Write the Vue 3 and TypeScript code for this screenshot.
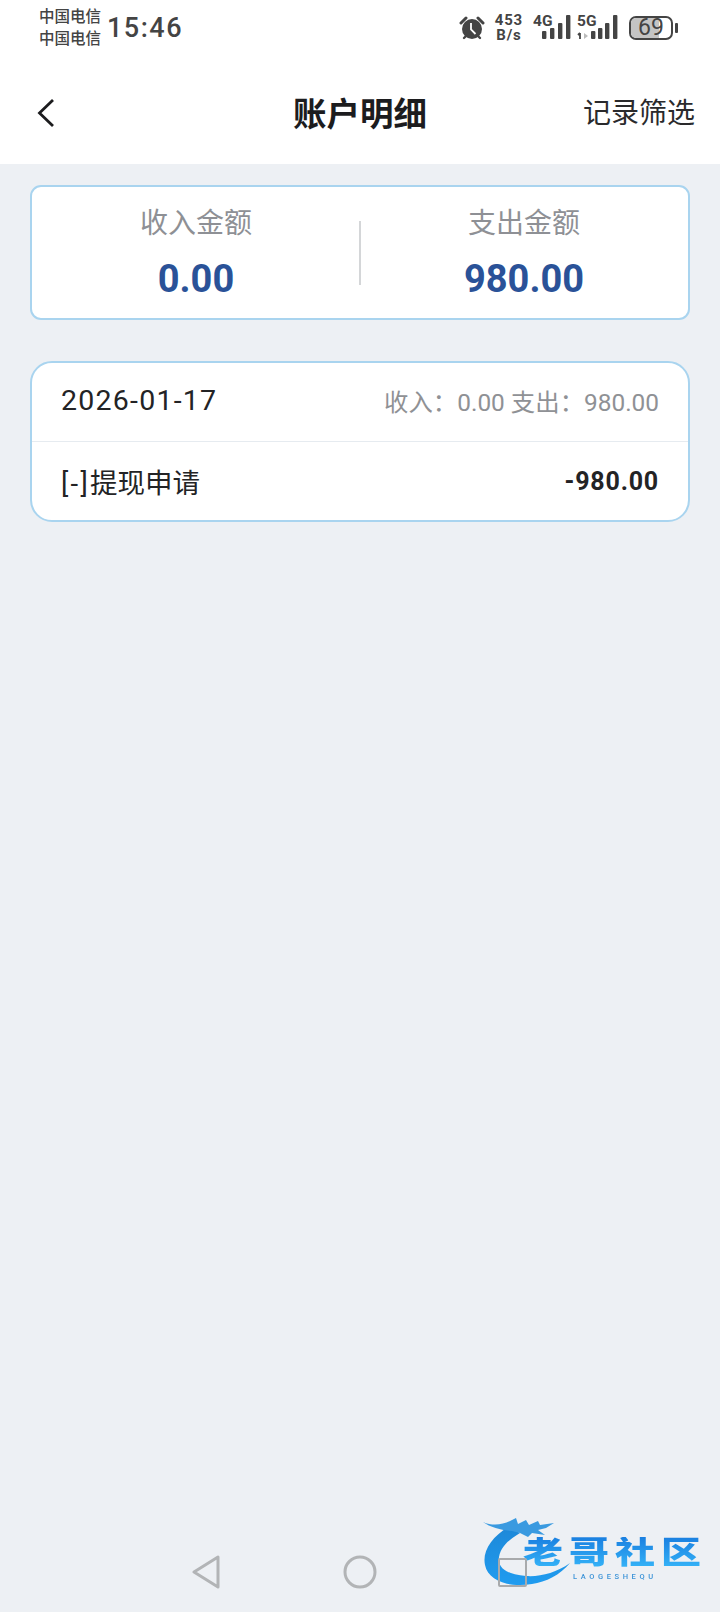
<template>
    <div class="page">
        <div class="top">
            <div class="status">
                <div class="carriers">
                    <span>中国电信</span>
                    <span>中国电信</span>
                </div>
                <div class="time">15:46</div>
                <div class="spacer"></div>
                <svg class="alarm" width="26" height="24" viewBox="0 0 26 24">
                    <circle cx="13" cy="13" r="10" fill="#444" />
                    <path d="M2 7 L7 2 M24 7 L19 2" stroke="#444" stroke-width="3" stroke-linecap="round" />
                    <path d="M5 22 L7 20 M21 22 L19 20" stroke="#444" stroke-width="2.4" stroke-linecap="round" />
                    <path d="M12 7 V13.5 L16.5 18" stroke="#fff" stroke-width="1.8" fill="none" />
                </svg>
                <div class="speed">
                    <span>453</span>
                    <span>B/s</span>
                </div>
                <svg class="signal" width="38" height="30" viewBox="0 -4 38 30">
                    <text x="0" y="12" class="net">4G</text>
                    <rect v-for="b in bars4g" :key="b.x" :x="b.x" :y="25 - b.h" width="4.4" :height="b.h" rx="1" fill="#444" />
                </svg>
                <svg class="signal" width="42" height="30" viewBox="0 -4 42 30">
                    <text x="0" y="12" class="net">5G</text>
                    <path d="M3 19 V25 M1 21 L3 19" stroke="#444" stroke-width="1.8" fill="none" />
                    <path d="M7 19 L11 22 L7 25 Z" fill="#bbb" />
                    <rect v-for="b in bars5g" :key="b.x" :x="b.x" :y="25 - b.h" width="4.4" :height="b.h" rx="1" fill="#444" />
                </svg>
                <div class="battery">
                    <div class="batt_body">
                        <div class="batt_fill"></div>
                        <span class="batt_txt">69</span>
                    </div>
                    <div class="batt_nub"></div>
                </div>
            </div>
            <div class="header">
                <svg class="back" width="20" height="30" viewBox="0 0 20 30">
                    <path d="M17 2 L3.5 15 L17 28" fill="none" stroke="#1c1c1e" stroke-width="2.8" />
                </svg>
                <div class="title">账户明细</div>
                <div class="filter">记录筛选</div>
            </div>
        </div>

        <div class="main">
            <div class="card summary">
                <div v-for="(s, i) of summary" :key="i" class="sum_col">
                    <div class="sum_label">{{ s.label }}</div>
                    <div class="sum_value">{{ s.value }}</div>
                </div>
                <div class="sum_line"></div>
            </div>

            <div class="card detail">
                <div class="row date_row">
                    <div class="date">2026-01-17</div>
                    <div class="totals">收入：0.00 支出：980.00</div>
                </div>
                <div class="row item_row">
                    <div class="item"><span class="sign">[-]</span>提现申请</div>
                    <div class="amount">-980.00</div>
                </div>
            </div>
        </div>

        <div class="nav">
            <svg width="32" height="36" viewBox="0 0 32 36">
                <path d="M26 3 V33 L2 18 Z" fill="none" stroke="#b2b4b6" stroke-width="3" stroke-linejoin="round" />
            </svg>
            <svg width="34" height="34" viewBox="0 0 34 34">
                <circle cx="17" cy="17" r="15" fill="none" stroke="#b2b4b6" stroke-width="3" />
            </svg>
            <div class="nav_square"></div>
        </div>

        <div class="logo">
            <svg class="dragon" width="90" height="76" viewBox="0 0 90 76">
                <defs>
                    <linearGradient id="dr" x1="0" y1="0" x2="0" y2="1">
                        <stop offset="0" stop-color="#1e88d8" />
                        <stop offset="1" stop-color="#1f9cf0" />
                    </linearGradient>
                </defs>
                <path d="M26 12 C10 22 0 36 3 50 C6 66 28 73 50 69 C64 67 78 60 88 48 C74 58 58 62 44 61 C28 60 15 54 17 42 C19 31 28 24 38 18 Z" fill="url(#dr)" />
                <path d="M1 7 C10 11 20 10 28 6 L34 3 L36 9 L44 5 L47 10 L56 6 L58 10 L72 8 L64 13 L56 15 L63 20 L50 18 L46 22 L38 18 L30 16 C18 15 8 12 1 7 Z" fill="#3a9ae0" />
            </svg>
            <div class="logo_txt">
                <div class="logo_cn">老哥社区</div>
                <div class="logo_en">LAOGESHEQU</div>
            </div>
        </div>
    </div>
</template>

<script setup lang="ts">

const bars4g = [
    { x: 9, h: 8 },
    { x: 17, h: 11 },
    { x: 25, h: 16 },
    { x: 33, h: 24 }
]

const bars5g = [
    { x: 14, h: 8 },
    { x: 21, h: 11 },
    { x: 28, h: 16 },
    { x: 36, h: 24 }
]

const summary = [
    { label: '收入金额', value: '0.00' },
    { label: '支出金额', value: '980.00' }
]

</script>

<style>
    html, body {
        margin: 0;
        background: #edf0f4;
    }
</style>

<style scoped>

    .page {
        position: relative;
        width: 720px;
        height: 1612px;
        overflow: hidden;
        display: flex;
        flex-direction: column;
        background-color: #edf0f4;
        font-family: Roboto, "Noto Sans CJK SC", sans-serif;
    }

    .top {
        height: 164px;
        background-color: #fff;
        flex: none;
    }

    .status {
        height: 56px;
        padding: 0 42px 0 39px;
        display: flex;
        align-items: center;
        color: #444;
    }

    .carriers {
        display: flex;
        flex-direction: column;
        font-size: 15.5px;
        line-height: 22px;
        font-weight: 500;
        margin-top: -1px;
    }

    .time {
        font-size: 27px;
        font-weight: 500;
        letter-spacing: 1.5px;
        margin-left: 6px;
    }

    .spacer {
        flex: 1;
    }

    .alarm {
        margin-right: 10px;
    }

    .speed {
        display: flex;
        flex-direction: column;
        align-items: center;
        font-size: 15px;
        line-height: 15px;
        font-weight: 700;
        letter-spacing: 0.8px;
        margin-right: 10px;
    }

    .signal {
        margin-right: 6px;
        margin-bottom: 6px;
    }

    .net {
        font-size: 15.5px;
        font-weight: 700;
        fill: #444;
        font-family: Roboto, sans-serif;
    }

    .battery {
        display: flex;
        align-items: center;
        margin-left: 4px;
    }

    .batt_body {
        position: relative;
        width: 44px;
        height: 24px;
        box-sizing: border-box;
        border: 2px solid #444;
        border-radius: 7px;
    }

    .batt_fill {
        width: 69%;
        height: 100%;
        background-color: #c4c4c4;
        border-radius: 5px 0 0 5px;
    }

    .batt_txt {
        position: absolute;
        left: 0;
        right: 0;
        top: -6px;
        text-align: center;
        font-size: 23px;
        line-height: 32px;
        color: #444;
    }

    .batt_nub {
        width: 3px;
        height: 10px;
        margin-left: 2px;
        background-color: #444;
        border-radius: 1px;
    }

    .header {
        position: relative;
        height: 108px;
        display: flex;
        align-items: center;
        justify-content: space-between;
        padding: 0 25px 0 36px;
    }

    .back {
        margin-top: 6px;
    }

    .title {
        position: absolute;
        left: 0;
        right: 0;
        top: 37px;
        text-align: center;
        font-size: 33.5px;
        line-height: 44px;
        font-weight: 700;
        color: #1c1c1e;
    }

    .filter {
        font-size: 28px;
        line-height: 36px;
        color: #2a2a2c;
        margin-top: 8px;
    }

    .main {
        flex: 1;
        padding: 21px 30px 0;
        display: flex;
        flex-direction: column;
        gap: 41px;
    }

    .card {
        background-color: #fff;
        border: 2px solid #a9d4ef;
        box-sizing: border-box;
    }

    .summary {
        position: relative;
        height: 135px;
        border-radius: 11px;
        display: grid;
        grid-template-columns: 1fr 1fr;
    }

    .sum_col {
        display: flex;
        flex-direction: column;
        align-items: center;
        padding-top: 19px;
    }

    .sum_label {
        font-size: 28px;
        line-height: 36px;
        color: #8e9095;
    }

    .sum_value {
        font-size: 38px;
        line-height: 50px;
        font-weight: 700;
        color: #2a5298;
        margin-top: 12px;
    }

    .sum_line {
        position: absolute;
        left: 327px;
        top: 34px;
        width: 1.5px;
        height: 64px;
        background-color: #d4d6d8;
    }

    .detail {
        height: 161px;
        border-radius: 22px;
    }

    .row {
        display: flex;
        align-items: center;
        justify-content: space-between;
        padding: 0 29px;
    }

    .date_row {
        height: 75px;
        padding-bottom: 3px;
        border-bottom: 1px solid #e6ebf0;
    }

    .item_row {
        height: 78px;
    }

    .date {
        font-size: 28.5px;
        letter-spacing: 1.25px;
        color: #232325;
    }

    .totals {
        font-size: 24.4px;
        color: #8f9195;
    }

    .item {
        font-size: 27.5px;
        color: #232325;
    }

    .sign {
        letter-spacing: 2.3px;
    }

    .amount {
        font-size: 25px;
        font-weight: 700;
        letter-spacing: 0.8px;
        color: #232325;
    }

    .nav {
        position: relative;
        z-index: 1;
        flex: none;
        height: 80px;
        display: grid;
        grid-template-columns: repeat(3, 152px);
        justify-content: center;
        justify-items: center;
        align-items: center;
    }

    .nav_square {
        width: 29px;
        height: 29px;
        box-sizing: border-box;
        border: 2.5px solid #a8aaac;
        border-radius: 2px;
    }

    .logo {
        position: absolute;
        left: 482px;
        top: 1515px;
        width: 226px;
        height: 76px;
        filter: blur(0.5px);
    }

    .dragon {
        position: absolute;
        left: 0;
        top: 0;
    }

    .logo_txt {
        position: absolute;
        left: 41px;
        top: 22px;
        width: 185px;
    }

    .logo_cn {
        font-size: 40px;
        line-height: 40px;
        font-weight: 900;
        letter-spacing: 6px;
        white-space: nowrap;
        transform-origin: left top;
        transform: scale(1, 0.78);
        background: linear-gradient(#1a7fe0, #35b4f8);
        -webkit-background-clip: text;
        background-clip: text;
        color: transparent;
    }

    .logo_en {
        margin: -5px 0 0 50px;
        font-size: 7.5px;
        line-height: 9px;
        letter-spacing: 3.6px;
        color: #3b93d8;
        white-space: nowrap;
        font-weight: 500;
    }

</style>
